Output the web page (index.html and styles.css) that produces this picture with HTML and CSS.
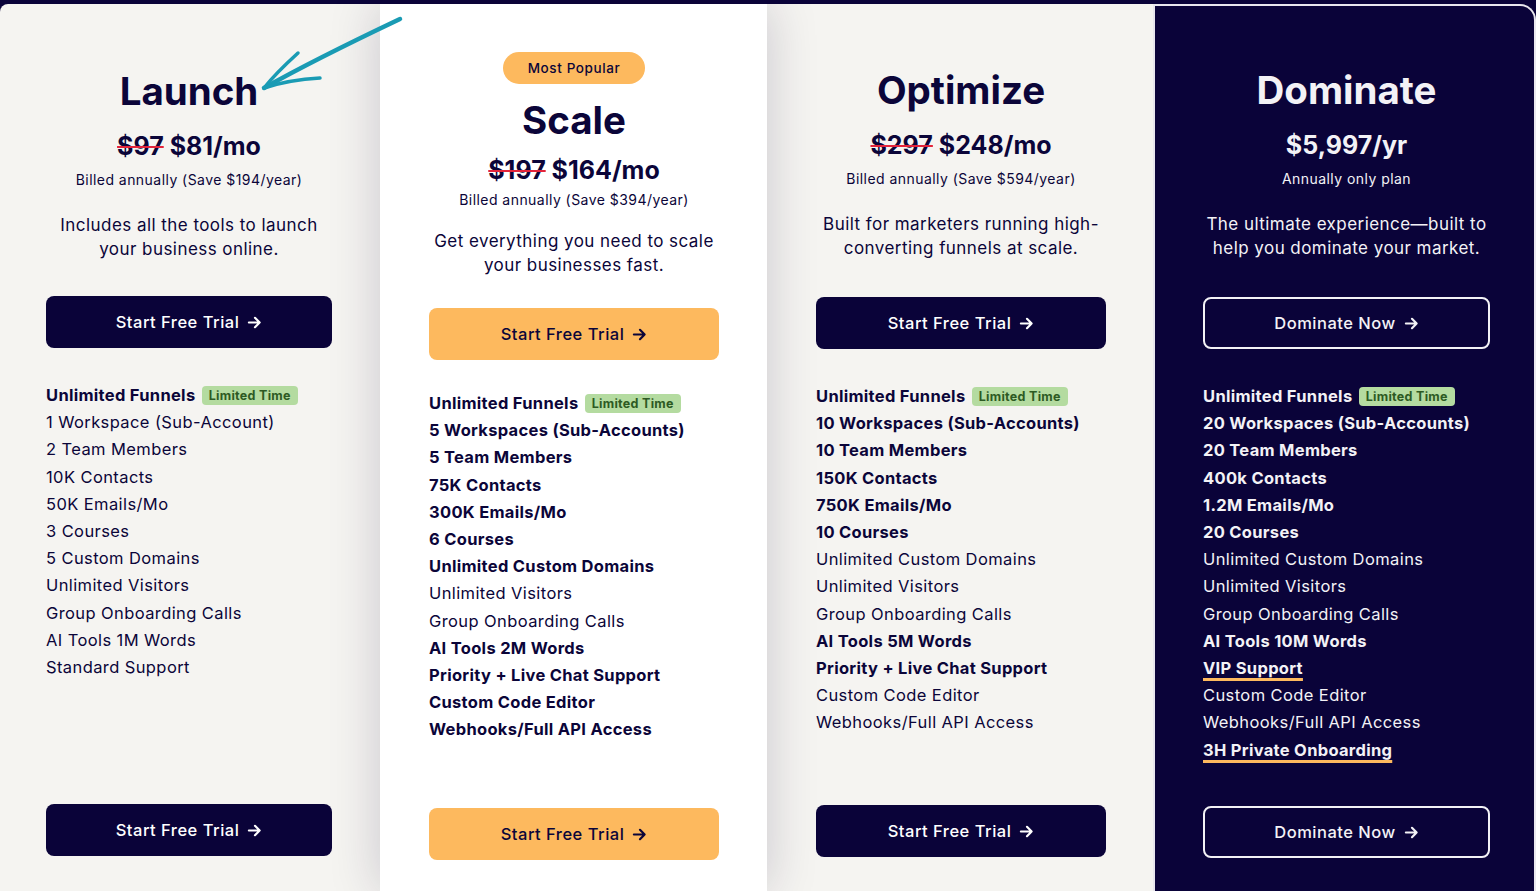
FILE: index.html
```html
<!DOCTYPE html>
<html lang="en">
<head>
<meta charset="utf-8">
<title>Pricing</title>
<link rel="stylesheet" href="styles.css">
</head>
<body>
<div class="page">
  <div class="plans">
    <section class="plan plan-light plan-first">
      <h2 class="plan-title">Launch</h2>
      <p class="price"><s class="old">$97</s> $81/mo</p>
      <p class="billed">Billed annually (Save $194/year)</p>
      <p class="desc">Includes all the tools to launch<br>your business online.</p>
      <a class="btn btn-navy" href="#">Start Free Trial <svg class="arrow" viewBox="0 0 16 16"><path d="M2 8h11.5M8.5 3l5 5-5 5"/></svg></a>
      <ul class="features">
        <li class="b">Unlimited Funnels <span class="tag">Limited Time</span></li>
        <li>1 Workspace (Sub-Account)</li>
        <li>2 Team Members</li>
        <li>10K Contacts</li>
        <li>50K Emails/Mo</li>
        <li>3 Courses</li>
        <li>5 Custom Domains</li>
        <li>Unlimited Visitors</li>
        <li>Group Onboarding Calls</li>
        <li>AI Tools 1M Words</li>
        <li>Standard Support</li>
      </ul>
      <a class="btn btn-navy btn-bottom" href="#">Start Free Trial <svg class="arrow" viewBox="0 0 16 16"><path d="M2 8h11.5M8.5 3l5 5-5 5"/></svg></a>
    </section>

    <section class="plan plan-popular">
      <span class="popular">Most Popular</span>
      <h2 class="plan-title">Scale</h2>
      <p class="price"><s class="old">$197</s> $164/mo</p>
      <p class="billed">Billed annually (Save $394/year)</p>
      <p class="desc">Get everything you need to scale<br>your businesses fast.</p>
      <a class="btn btn-orange" href="#">Start Free Trial <svg class="arrow" viewBox="0 0 16 16"><path d="M2 8h11.5M8.5 3l5 5-5 5"/></svg></a>
      <ul class="features">
        <li class="b">Unlimited Funnels <span class="tag">Limited Time</span></li>
        <li class="b">5 Workspaces (Sub-Accounts)</li>
        <li class="b">5 Team Members</li>
        <li class="b">75K Contacts</li>
        <li class="b">300K Emails/Mo</li>
        <li class="b">6 Courses</li>
        <li class="b">Unlimited Custom Domains</li>
        <li>Unlimited Visitors</li>
        <li>Group Onboarding Calls</li>
        <li class="b">AI Tools 2M Words</li>
        <li class="b">Priority + Live Chat Support</li>
        <li class="b">Custom Code Editor</li>
        <li class="b">Webhooks/Full API Access</li>
      </ul>
      <a class="btn btn-orange btn-bottom" href="#">Start Free Trial <svg class="arrow" viewBox="0 0 16 16"><path d="M2 8h11.5M8.5 3l5 5-5 5"/></svg></a>
    </section>

    <section class="plan plan-light plan-third">
      <h2 class="plan-title">Optimize</h2>
      <p class="price"><s class="old">$297</s> $248/mo</p>
      <p class="billed">Billed annually (Save $594/year)</p>
      <p class="desc">Built for marketers running high-<br>converting funnels at scale.</p>
      <a class="btn btn-navy" href="#">Start Free Trial <svg class="arrow" viewBox="0 0 16 16"><path d="M2 8h11.5M8.5 3l5 5-5 5"/></svg></a>
      <ul class="features">
        <li class="b">Unlimited Funnels <span class="tag">Limited Time</span></li>
        <li class="b">10 Workspaces (Sub-Accounts)</li>
        <li class="b">10 Team Members</li>
        <li class="b">150K Contacts</li>
        <li class="b">750K Emails/Mo</li>
        <li class="b">10 Courses</li>
        <li>Unlimited Custom Domains</li>
        <li>Unlimited Visitors</li>
        <li>Group Onboarding Calls</li>
        <li class="b">AI Tools 5M Words</li>
        <li class="b">Priority + Live Chat Support</li>
        <li>Custom Code Editor</li>
        <li>Webhooks/Full API Access</li>
      </ul>
      <a class="btn btn-navy btn-bottom" href="#">Start Free Trial <svg class="arrow" viewBox="0 0 16 16"><path d="M2 8h11.5M8.5 3l5 5-5 5"/></svg></a>
    </section>

    <section class="plan plan-dark">
      <h2 class="plan-title">Dominate</h2>
      <p class="price">$5,997/yr</p>
      <p class="billed">Annually only plan</p>
      <p class="desc">The ultimate experience—built to<br>help you dominate your market.</p>
      <a class="btn btn-outline" href="#">Dominate Now <svg class="arrow" viewBox="0 0 16 16"><path d="M2 8h11.5M8.5 3l5 5-5 5"/></svg></a>
      <ul class="features">
        <li class="b">Unlimited Funnels <span class="tag">Limited Time</span></li>
        <li class="b">20 Workspaces (Sub-Accounts)</li>
        <li class="b">20 Team Members</li>
        <li class="b">400k Contacts</li>
        <li class="b">1.2M Emails/Mo</li>
        <li class="b">20 Courses</li>
        <li>Unlimited Custom Domains</li>
        <li>Unlimited Visitors</li>
        <li>Group Onboarding Calls</li>
        <li class="b">AI Tools 10M Words</li>
        <li class="b"><span class="mark">VIP Support</span></li>
        <li>Custom Code Editor</li>
        <li>Webhooks/Full API Access</li>
        <li class="b"><span class="mark">3H Private Onboarding</span></li>
      </ul>
      <a class="btn btn-outline btn-bottom" href="#">Dominate Now <svg class="arrow" viewBox="0 0 16 16"><path d="M2 8h11.5M8.5 3l5 5-5 5"/></svg></a>
    </section>
  </div>

  <svg class="pointer" viewBox="0 0 420 100" aria-hidden="true">
    <path class="shaft" d="M400 19 C360 38 310 62 264 88"/>
    <path d="M264 88 C275 74 287 63 298 53"/>
    <path d="M264 88 C282 82 302 79 320 78"/>
  </svg>
</div>
</body>
</html>
```

FILE: styles.css
```css
* { box-sizing: border-box; }

html, body {
  margin: 0;
  padding: 0;
}

body {
  background: #0a0339;
  font-family: Inter, "Noto Sans", "Liberation Sans", sans-serif;
  color: #0b0539;
  overflow: hidden;
}

.page {
  position: relative;
  height: 891px;
  padding-top: 4px;
}

.plans {
  display: grid;
  grid-template-columns: 380px 387px 386px 1fr;
  height: 887px;
}

.plan {
  display: flex;
  flex-direction: column;
  align-items: center;
  padding: 63px 48px 35px 46px;
  text-align: center;
}

.plan-light { background: #f5f4f1; }
.plan-first { border-top-left-radius: 8px; }
.plan-third {
  padding: 62px 47px 34px 49px;
}
.plan-third .btn { margin-top: 37px; }
.plan-third .btn-bottom { margin-top: auto; }

.plan-popular {
  background: #ffffff;
  position: relative;
  z-index: 2;
  box-shadow: 0 0 48px rgba(30, 20, 60, 0.2);
  padding: 48px 48px 31px 49px;
}

.plan-dark {
  background: #0a0339;
  color: #f3f2f6;
  border: 2px solid #e9e7ee;
  border-bottom: 0;
  border-top-right-radius: 16px;
  padding: 60px 44px 33px 48px;
}
.plan-dark .btn { margin-top: 37px; }
.plan-dark .btn-bottom { margin-top: auto; }

.plan-title {
  margin: 0;
  font-size: 38.5px;
  line-height: 48px;
  font-weight: 700;
  letter-spacing: 0;
}

.price {
  margin: 15px 0 0;
  font-size: 25px;
  line-height: 32px;
  font-weight: 700;
}

.old {
  text-decoration: line-through;
  text-decoration-color: #e3243b;
  text-decoration-thickness: 2px;
}

.billed {
  margin: 8px 0 0;
  font-size: 14px;
  line-height: 20px;
  letter-spacing: 0.45px;
}

.desc {
  margin: 24px 0 0;
  font-size: 17px;
  line-height: 23.5px;
  letter-spacing: 0.45px;
}

.btn {
  display: flex;
  align-items: center;
  justify-content: center;
  gap: 8px;
  width: 100%;
  height: 52px;
  margin-top: 35px;
  border-radius: 8px;
  font-size: 16.5px;
  font-weight: 500;
  letter-spacing: 0.5px;
  text-decoration: none;
  flex-shrink: 0;
}

.arrow {
  width: 15px;
  height: 15px;
  fill: none;
  stroke: currentColor;
  stroke-width: 2.3;
  stroke-linecap: round;
  stroke-linejoin: round;
}

.btn-navy { background: #0a0339; color: #ffffff; }
.btn-orange { background: #fdb95e; color: #0b0539; }
.btn-outline {
  background: transparent;
  color: #f3f2f6;
  border: 2px solid #f3f2f6;
}

.btn-bottom { margin-top: auto; }

.features {
  list-style: none;
  margin: 34px 0 0;
  padding: 0;
  align-self: stretch;
  text-align: left;
  font-size: 16.5px;
  line-height: 27.2px;
  letter-spacing: 0.4px;
}

.features li { white-space: nowrap; }
.features .b { font-weight: 700; letter-spacing: 0.3px; }

.tag {
  display: inline-block;
  margin-left: 2px;
  padding: 0 7px;
  background: #b4dba0;
  color: #2d5a23;
  border-radius: 4px;
  font-size: 12.5px;
  line-height: 19px;
  font-weight: 700;
  letter-spacing: 0.3px;
  vertical-align: 1px;
}

.mark {
  text-decoration: underline;
  text-decoration-color: #fdb95e;
  text-decoration-thickness: 3px;
  text-underline-offset: 4px;
}

/* popular column spacing */
.popular {
  display: inline-block;
  height: 32px;
  padding: 0 25px;
  border-radius: 16px;
  background: #fdb95e;
  color: #0b0539;
  font-size: 13.5px;
  line-height: 32px;
  font-weight: 500;
  letter-spacing: 0.6px;
}

.plan-popular .plan-title { margin-top: 12px; }
.plan-popular .price { margin-top: 10px; }
.plan-popular .billed { margin-top: 4px; }
.plan-popular .desc { margin-top: 20px; }
.plan-popular .btn { margin-top: 31px; }
.plan-popular .features { margin-top: 30px; }
.plan-popular .btn-bottom { margin-top: auto; }

.pointer {
  position: absolute;
  left: 0;
  top: 0;
  width: 420px;
  height: 100px;
  fill: none;
  stroke: #1a9bb4;
  stroke-width: 3.5;
  stroke-linecap: round;
  z-index: 5;
  pointer-events: none;
}

.pointer .shaft { stroke-width: 4.5; }
```
